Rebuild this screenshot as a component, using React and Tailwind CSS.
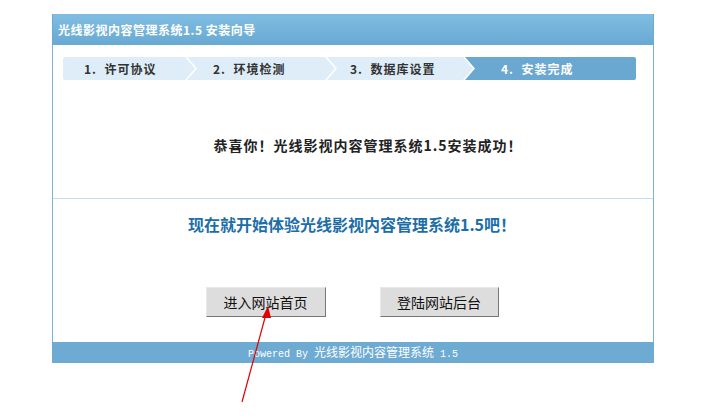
const cjk = '"Noto Sans CJK SC", "Liberation Sans", sans-serif'
const mono = '"Liberation Mono", "Noto Sans CJK SC", monospace'

function Chevron({ from, to }) {
  // separator arrow between two step cells
  return (
    <svg width="14" height="23" viewBox="0 0 14 23" className="shrink-0 block">
      <rect x="0" y="0" width="14" height="23" fill={to} />
      <polygon points="0,0 4,0 14,11.5 4,23 0,23" fill="#ffffff" />
      <polygon points="0,0 2,0 12,11.5 2,23 0,23" fill={from} />
    </svg>
  )
}

export default function App() {
  return (
    <div className="relative w-[724px] h-[420px] bg-white" style={{ fontFamily: cjk }}>
      <div className="pt-[14px] pl-[52px]">
        <div className="w-[602px]">
          {/* header */}
          <div className="h-[31px] bg-gradient-to-b from-[#80bde2] to-[#68a9d2] border-l border-r border-[#6fa9d2] flex items-center pl-[5px]">
            <span className="text-white text-[12px] font-bold tracking-[0.5px]">光线影视内容管理系统1.5 安装向导</span>
          </div>

          {/* body */}
          <div className="border-l border-r border-[#7ab2d8] h-[297px] flex flex-col">
            <div className="h-[153px] flex flex-col">
              <div className="pt-[12px] pl-[10px]">
                <div className="flex w-[573px] h-[23px] rounded-[2px] overflow-hidden">
                  <div className="w-[120px] bg-[#deedf8] flex items-center pl-[21px] text-[12px] font-bold text-[#333]">
                    <span className="tracking-[1px]">1.&nbsp;&nbsp;许可协议</span>
                  </div>
                  <Chevron from="#deedf8" to="#deedf8" />
                  <div className="w-[126px] bg-[#deedf8] flex items-center pl-[16px] text-[12px] font-bold text-[#333]">
                    <span className="tracking-[1px]">2.&nbsp;&nbsp;环境检测</span>
                  </div>
                  <Chevron from="#deedf8" to="#deedf8" />
                  <div className="w-[124px] bg-[#deedf8] flex items-center pl-[13px] text-[12px] font-bold text-[#333]">
                    <span className="tracking-[1px]">3.&nbsp;&nbsp;数据库设置</span>
                  </div>
                  <Chevron from="#deedf8" to="#6aa8d1" />
                  <div className="flex-1 bg-[#6aa8d1] flex items-center pl-[26px] text-[12px] font-bold text-white">
                    <span className="tracking-[1px]">4.&nbsp;&nbsp;安装完成</span>
                  </div>
                </div>
              </div>
              <div className="flex-1 flex items-center justify-center pt-[12px]">
                <span className="text-[14px] font-bold text-[#222] pl-[30px] tracking-[1px]">恭喜你！光线影视内容管理系统1.5安装成功！</span>
              </div>
            </div>
            <div className="h-px bg-[#c6ddf0]" />
            <div className="flex-1 flex flex-col items-center">
              <div className="mt-[13px] text-[16px] font-bold text-[#1d6ea7] pr-[2px]">现在就开始体验光线影视内容管理系统1.5吧！</div>
              <div className="mt-[51px] flex gap-[54px] pr-[2px]">
                <button className="w-[120px] h-[30px] bg-[#dddddd] border border-[#e8e8e8] border-r-[#777] border-b-[#777] text-[14px] text-[#111]">进入网站首页</button>
                <button className="w-[119px] h-[30px] bg-[#dddddd] border border-[#e8e8e8] border-r-[#777] border-b-[#777] text-[14px] text-[#111]">登陆网站后台</button>
              </div>
            </div>
          </div>

          {/* footer */}
          <div className="h-[21px] bg-[#6eabd3] flex items-center justify-center">
            <span className="text-white text-[12px] whitespace-pre">
              <span className="text-[10px]" style={{ fontFamily: mono }}>Powered By </span>
              光线影视内容管理系统
              <span className="text-[10px]" style={{ fontFamily: mono }}> 1.5</span>
            </span>
          </div>
        </div>
      </div>

      {/* red annotation arrow */}
      <svg className="absolute left-0 top-0 pointer-events-none" width="724" height="420">
        <line x1="242" y1="402" x2="266" y2="314" stroke="#e00000" strokeWidth="1.2" />
        <polygon points="268,306 262,318 271,318" fill="#e00000" />
      </svg>
    </div>
  )
}
